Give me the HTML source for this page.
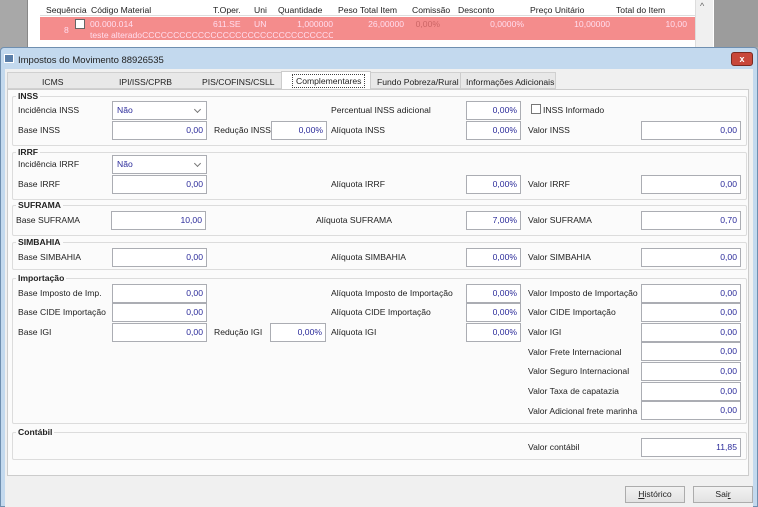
<!DOCTYPE html><html><head><meta charset="utf-8"><style>
*{margin:0;padding:0;box-sizing:border-box}
body{width:758px;height:507px;position:relative;overflow:hidden;background:#a8a8a8;font-family:"Liberation Sans",sans-serif;font-size:8.6px;color:#222}
div,span{position:absolute;white-space:nowrap}
.l{line-height:12px}
.r{text-align:right}
.i{height:19px;border:1px solid #abadb3;background:#fff;text-align:right;color:#2b2b9a;padding-right:3px;line-height:17px}
.c{height:19px;border:1px solid #abadb3;background:#fff;color:#2b2b9a;padding-left:4px;line-height:17px}
.c:after{content:"";position:absolute;right:6px;top:5px;width:4px;height:4px;border-right:1px solid #777;border-bottom:1px solid #777;transform:rotate(45deg)}
.g{border:1px solid #dcdcdc;border-radius:2px;left:12px;width:735px}
.h{font-weight:bold;background:#fbfbfb;padding:0 2px;line-height:11px;left:16px}
.b{height:17px;border:1px solid #acacac;background:linear-gradient(#f2f2f2,#e2e2e2);text-align:center;line-height:15px}
.w{color:#fde}
</style></head><body>
<div style="left:27px;top:0;width:687px;height:47px;background:#fff;border-left:1px solid #888"></div>
<div style="left:714px;top:0;width:44px;height:47px;background:#9c9c9c"></div>
<div style="left:695px;top:0;width:18px;height:47px;background:#f0f0f0;border-left:1px solid #ddd"></div>
<div style="left:700px;top:1px;font-size:9px;color:#666">^</div>
<div style="left:40px;top:0;width:655px;height:16px;background:#fff;border-bottom:1px solid #ddd"></div>
<div class="l" style="left:46px;top:4px">Sequência</div>
<div class="l" style="left:91px;top:4px">Código Material</div>
<div class="l" style="left:213px;top:4px">T.Oper.</div>
<div class="l" style="left:254px;top:4px">Uni</div>
<div class="l" style="left:278px;top:4px">Quantidade</div>
<div class="l" style="left:338px;top:4px">Peso Total Item</div>
<div class="l" style="left:412px;top:4px">Comissão</div>
<div class="l" style="left:458px;top:4px">Desconto</div>
<div class="l" style="left:530px;top:4px">Preço Unitário</div>
<div class="l" style="left:616px;top:4px">Total do Item</div>
<div style="left:40px;top:17px;width:655px;height:23px;background:#f48c8c"></div>
<div style="left:75px;top:19px;width:10px;height:10px;background:#fff;border:1px solid #666"></div>
<div class="l w" style="left:64px;top:24px">8</div>
<div class="l w" style="left:90px;top:18px">00.000.014</div>
<div class="l w" style="left:213px;top:18px">611.SE</div>
<div class="l w" style="left:254px;top:18px">UN</div>
<div class="l w r" style="left:273px;width:60px;top:18px">1,000000</div>
<div class="l w r" style="left:344px;width:60px;top:18px">26,00000</div>
<div class="l r" style="left:400px;width:40px;top:18px;color:#c66">0,00%</div>
<div class="l w r" style="left:464px;width:60px;top:18px">0,0000%</div>
<div class="l w r" style="left:550px;width:60px;top:18px">10,00000</div>
<div class="l w r" style="left:627px;width:60px;top:18px">10,00</div>
<div class="l w" style="left:90px;top:29px;width:243px;overflow:hidden">teste alteradoCCCCCCCCCCCCCCCCCCCCCCCCCCCCCCCCCCCCCCC</div>
<div style="left:0;top:47px;width:758px;height:460px;background:#c3d9ee;border:1px solid #6f8fb0;border-radius:4px 4px 0 0"></div>
<div style="left:4px;top:54px;width:10px;height:9px;background:#5a7ea8;border:1px solid #fff"></div>
<div class="l" style="left:18px;top:55px;font-size:9.5px">Impostos do Movimento 88926535</div>
<div style="left:731px;top:52px;width:22px;height:14px;background:#c8473a;border:1px solid #7a2a22;border-radius:3px;color:#fff;text-align:center;font-size:9px;font-weight:bold;line-height:12px">x</div>
<div style="left:5px;top:69px;width:748px;height:438px;background:#f0f0f0"></div>
<div style="left:7px;top:72px;width:549px;height:17px;background:#e8e8e8;border:1px solid #d0d0d0"></div>
<div class="l" style="left:42px;top:76px">ICMS</div>
<div class="l" style="left:119px;top:76px">IPI/ISS/CPRB</div>
<div class="l" style="left:202px;top:76px">PIS/COFINS/CSLL</div>
<div style="left:281px;top:71px;width:90px;height:19px;background:#fff;border:1px solid #ccc;border-bottom:none"></div>
<div class="l" style="left:292px;top:74px;border:1px dotted #444;padding:0 3px">Complementares</div>
<div class="l" style="left:377px;top:76px">Fundo Pobreza/Rural</div>
<div style="left:460px;top:73px;height:15px;border-left:1px solid #ccc"></div>
<div class="l" style="left:466px;top:76px">Informações Adicionais</div>
<div style="left:7px;top:89px;width:742px;height:387px;background:#fbfbfb;border:1px solid #ccc"></div>
<div class="g" style="top:96px;height:50px"></div><div class="h" style="top:91px">INSS</div>
<div class="g" style="top:152px;height:48px"></div><div class="h" style="top:147px">IRRF</div>
<div class="g" style="top:205px;height:31px"></div><div class="h" style="top:200px">SUFRAMA</div>
<div class="g" style="top:242px;height:28px"></div><div class="h" style="top:237px">SIMBAHIA</div>
<div class="g" style="top:278px;height:146px"></div><div class="h" style="top:273px">Importação</div>
<div class="g" style="top:432px;height:28px"></div><div class="h" style="top:427px">Contábil</div>
<div class="l" style="left:18px;top:104px">Incidência INSS</div><div class="c" style="left:112px;top:101px;width:95px">Não</div>
<div class="l" style="left:331px;top:104px">Percentual INSS adicional</div><div class="i" style="left:466px;top:101px;width:55px">0,00%</div>
<div style="left:531px;top:104px;width:10px;height:10px;border:1px solid #777;background:#fff"></div><div class="l" style="left:543px;top:104px">INSS Informado</div>
<div class="l" style="left:18px;top:124px">Base INSS</div><div class="i" style="left:112px;top:121px;width:95px">0,00</div>
<div class="l" style="left:214px;top:124px">Redução INSS</div><div class="i" style="left:271px;top:121px;width:56px">0,00%</div>
<div class="l" style="left:331px;top:124px">Alíquota INSS</div><div class="i" style="left:466px;top:121px;width:55px">0,00%</div>
<div class="l" style="left:528px;top:124px">Valor INSS</div><div class="i" style="left:641px;top:121px;width:100px">0,00</div>
<div class="l" style="left:18px;top:158px">Incidência IRRF</div><div class="c" style="left:112px;top:155px;width:95px">Não</div>
<div class="l" style="left:18px;top:178px">Base IRRF</div><div class="i" style="left:112px;top:175px;width:95px">0,00</div>
<div class="l" style="left:331px;top:178px">Alíquota IRRF</div><div class="i" style="left:466px;top:175px;width:55px">0,00%</div>
<div class="l" style="left:528px;top:178px">Valor IRRF</div><div class="i" style="left:641px;top:175px;width:100px">0,00</div>
<div class="l" style="left:16px;top:214px">Base SUFRAMA</div><div class="i" style="left:111px;top:211px;width:95px">10,00</div>
<div class="l" style="left:316px;top:214px">Alíquota SUFRAMA</div><div class="i" style="left:466px;top:211px;width:55px">7,00%</div>
<div class="l" style="left:528px;top:214px">Valor SUFRAMA</div><div class="i" style="left:641px;top:211px;width:100px">0,70</div>
<div class="l" style="left:18px;top:251px">Base SIMBAHIA</div><div class="i" style="left:112px;top:248px;width:95px">0,00</div>
<div class="l" style="left:331px;top:251px">Alíquota SIMBAHIA</div><div class="i" style="left:466px;top:248px;width:55px">0,00%</div>
<div class="l" style="left:528px;top:251px">Valor SIMBAHIA</div><div class="i" style="left:641px;top:248px;width:100px">0,00</div>
<div class="l" style="left:18px;top:287px">Base Imposto de Imp.</div><div class="i" style="left:112px;top:284px;width:95px">0,00</div>
<div class="l" style="left:331px;top:287px">Alíquota Imposto de Importação</div><div class="i" style="left:466px;top:284px;width:55px">0,00%</div>
<div class="l" style="left:528px;top:287px">Valor Imposto de Importação</div><div class="i" style="left:641px;top:284px;width:100px">0,00</div>
<div class="l" style="left:18px;top:306px">Base CIDE Importação</div><div class="i" style="left:112px;top:303px;width:95px">0,00</div>
<div class="l" style="left:331px;top:306px">Alíquota CIDE Importação</div><div class="i" style="left:466px;top:303px;width:55px">0,00%</div>
<div class="l" style="left:528px;top:306px">Valor CIDE Importação</div><div class="i" style="left:641px;top:303px;width:100px">0,00</div>
<div class="l" style="left:18px;top:326px">Base IGI</div><div class="i" style="left:112px;top:323px;width:95px">0,00</div>
<div class="l" style="left:214px;top:326px">Redução IGI</div><div class="i" style="left:270px;top:323px;width:56px">0,00%</div>
<div class="l" style="left:331px;top:326px">Alíquota IGI</div><div class="i" style="left:466px;top:323px;width:55px">0,00%</div>
<div class="l" style="left:528px;top:326px">Valor IGI</div><div class="i" style="left:641px;top:323px;width:100px">0,00</div>
<div class="l" style="left:528px;top:346px">Valor Frete Internacional</div><div class="i" style="left:641px;top:342px;width:100px">0,00</div>
<div class="l" style="left:528px;top:365px">Valor Seguro Internacional</div><div class="i" style="left:641px;top:362px;width:100px">0,00</div>
<div class="l" style="left:528px;top:385px">Valor Taxa de capatazia</div><div class="i" style="left:641px;top:382px;width:100px">0,00</div>
<div class="l" style="left:528px;top:405px">Valor Adicional frete marinha</div><div class="i" style="left:641px;top:401px;width:100px">0,00</div>
<div class="l" style="left:528px;top:441px">Valor contábil</div><div class="i" style="left:641px;top:438px;width:100px">11,85</div>
<div class="b" style="left:625px;top:486px;width:60px"><u>H</u>istórico</div>
<div class="b" style="left:693px;top:486px;width:60px">Sai<u>r</u></div>
</body></html>
